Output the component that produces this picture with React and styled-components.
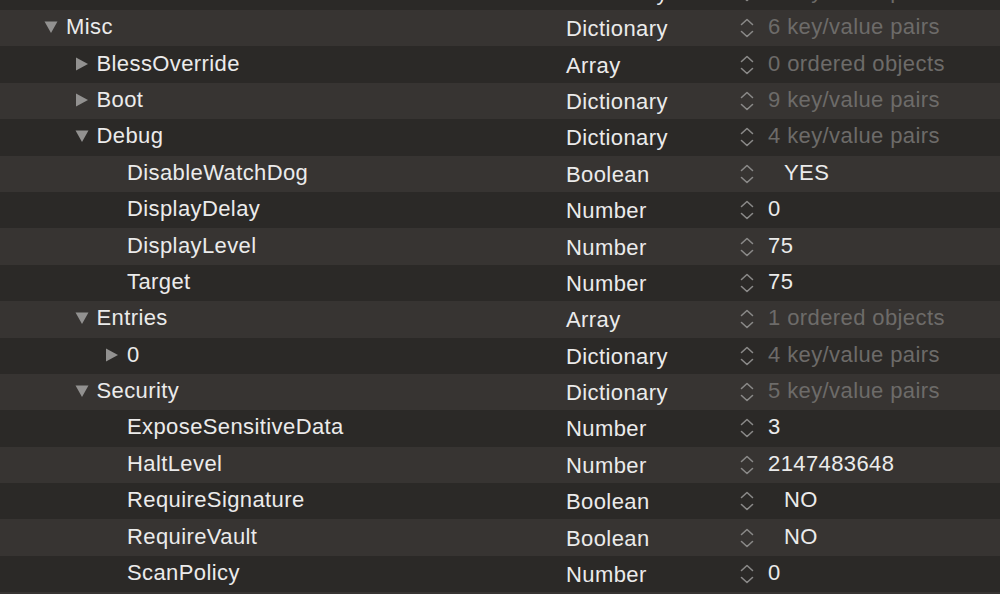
import React from 'react';
import styled, { createGlobalStyle } from 'styled-components';

const GlobalStyle = createGlobalStyle`
  html, body {
    margin: 0;
    padding: 0;
    background: #2b2927;
    overflow: hidden;
  }
  body {
    font-family: "Liberation Sans", Arial, Helvetica, sans-serif;
  }
`;

const rows = [
  { key: 'Scheme', level: 1, type: 'Dictionary', value: '3 key/value pairs', dim: true },
  { key: 'Misc', level: 0, open: true, type: 'Dictionary', value: '6 key/value pairs', dim: true },
  { key: 'BlessOverride', level: 1, open: false, type: 'Array', value: '0 ordered objects', dim: true },
  { key: 'Boot', level: 1, open: false, type: 'Dictionary', value: '9 key/value pairs', dim: true },
  { key: 'Debug', level: 1, open: true, type: 'Dictionary', value: '4 key/value pairs', dim: true },
  { key: 'DisableWatchDog', level: 2, type: 'Boolean', value: 'YES', bool: true },
  { key: 'DisplayDelay', level: 2, type: 'Number', value: '0' },
  { key: 'DisplayLevel', level: 2, type: 'Number', value: '75' },
  { key: 'Target', level: 2, type: 'Number', value: '75' },
  { key: 'Entries', level: 1, open: true, type: 'Array', value: '1 ordered objects', dim: true },
  { key: '0', level: 2, open: false, type: 'Dictionary', value: '4 key/value pairs', dim: true },
  { key: 'Security', level: 1, open: true, type: 'Dictionary', value: '5 key/value pairs', dim: true },
  { key: 'ExposeSensitiveData', level: 2, type: 'Number', value: '3' },
  { key: 'HaltLevel', level: 2, type: 'Number', value: '2147483648' },
  { key: 'RequireSignature', level: 2, type: 'Boolean', value: 'NO', bool: true },
  { key: 'RequireVault', level: 2, type: 'Boolean', value: 'NO', bool: true },
  { key: 'ScanPolicy', level: 2, type: 'Number', value: '0' },
  { key: 'Vault', level: 2, type: 'String', value: 'Secure' },
];

const Disclosure = ({ open }) => (
  <Toggle viewBox="0 0 14 14">
    {open ? <path d="M0.5 1.5 L13.5 1.5 L7 13 Z" /> : <path d="M1 0.5 L13 7 L1 13.5 Z" />}
  </Toggle>
);

const Stepper = () => (
  <StepIcon viewBox="0 0 16 20">
    <path d="M2.5 6.5 L8 1.5 L13.5 6.5" />
    <path d="M2.5 13.5 L8 18.5 L13.5 13.5" />
  </StepIcon>
);

const App = () => {
  return (
    <>
      <GlobalStyle />
      <Outline>
        {rows.map((r, i) => (
          <Row key={i} $alt={i % 2 === 1}>
            <KeyCell $level={r.level}>
              <DisclosureSlot>
                {r.open !== undefined && <Disclosure open={r.open} />}
              </DisclosureSlot>
              <span>{r.key}</span>
            </KeyCell>
            <TypeCell>{r.type}</TypeCell>
            <StepCell>
              <Stepper />
            </StepCell>
            <ValueCell $dim={r.dim} $bool={r.bool}>
              {r.value}
            </ValueCell>
          </Row>
        ))}
      </Outline>
    </>
  );
};

const Outline = styled.div`
  display: flex;
  flex-direction: column;
  margin-top: -26.4px;
  width: 1000px;
`;

const Row = styled.div`
  display: grid;
  grid-template-columns: 566px 172px 30px 1fr;
  align-items: center;
  height: 36.4px;
  background: ${p => (p.$alt ? '#373432' : '#2b2927')};
  color: #ebebeb;
  font-size: 22px;
  letter-spacing: 0.4px;
  white-space: nowrap;
`;

const KeyCell = styled.div`
  display: flex;
  align-items: center;
  padding-left: ${p => 44 + p.$level * 30.5}px;
  padding-bottom: 2px;
`;

const DisclosureSlot = styled.span`
  display: inline-flex;
  align-items: center;
  width: 22px;
  flex: none;
`;

const Toggle = styled.svg`
  width: 14px;
  height: 14px;
  fill: #929190;
`;

const TypeCell = styled.div`
  padding-top: 2px;
`;

const StepCell = styled.div`
  display: flex;
  align-items: center;
  padding-left: 1px;
`;

const StepIcon = styled.svg`
  width: 16px;
  height: 20px;
  fill: none;
  stroke: #8a8988;
  stroke-width: 1.6;
  stroke-linecap: round;
  stroke-linejoin: round;
`;

const ValueCell = styled.div`
  padding-left: ${p => (p.$bool ? '16px' : '0')};
  padding-bottom: 2px;
  color: ${p => (p.$dim ? '#6d6b69' : '#ebebeb')};
`;

export default App;
